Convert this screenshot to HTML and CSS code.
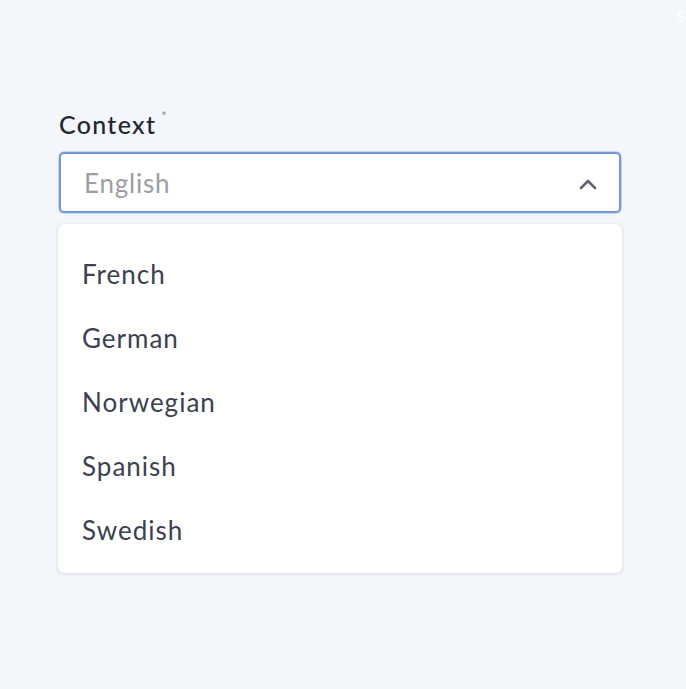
FILE: index.html
```html
<!DOCTYPE html>
<html lang="en">
<head>
<meta charset="utf-8">
<title>Context select</title>
<link rel="stylesheet" href="styles.css">
</head>
<body>
<div class="page">
  <span class="corner">S</span>
  <div class="field">
    <div class="label">Context<span class="req">*</span></div>
    <div class="select">
      <span class="value">English</span>
      <svg class="chev" width="18" height="12" viewBox="0 0 18 12"><path d="M2 10 L9 3 L16 10" fill="none" stroke="#5f6470" stroke-width="2.6" stroke-linecap="round" stroke-linejoin="round"/></svg>
    </div>
    <ul class="menu">
      <li>French</li>
      <li>German</li>
      <li>Norwegian</li>
      <li>Spanish</li>
      <li>Swedish</li>
    </ul>
  </div>
</div>
</body>
</html>
```

FILE: styles.css
```css
* { box-sizing: border-box; }
html, body { margin: 0; padding: 0; }
body {
  background: #f3f6fb;
  font-family: "Lato", "Open Sans", sans-serif;
  width: 686px;
  height: 689px;
  overflow: hidden;
}
.page {
  position: relative;
  width: 686px;
  height: 689px;
  padding: 104px 64px 0 58px;
}
.corner {
  position: absolute;
  right: 1px;
  top: 6px;
  color: #ffffff;
  font-size: 16px;
}
.field {
  width: 564px;
}
.label {
  font-size: 25px;
  font-weight: 500;
  letter-spacing: 1.3px;
  color: #22262e;
  padding-left: 1px;
  height: 40px;
  line-height: 40px;
}
.req {
  font-size: 13px;
  color: #8a8f99;
  vertical-align: top;
  line-height: 24px;
  margin-left: 5px;
  font-weight: 400;
}
.select {
  margin: 8px 1px 0 1px;
  height: 61px;
  background: #fff;
  border: 2px solid #7497d8;
  border-radius: 5px;
  box-shadow: 0 0 0 1px #c9d8f2;
  display: flex;
  align-items: center;
  justify-content: space-between;
  padding: 0 22px 0 23px;
}
.value {
  font-size: 26px;
  letter-spacing: 0.8px;
  color: #9b9ea4;
}
.chev { display: block; margin-top: 2px; }
.menu {
  list-style: none;
  margin: 11px 0 0 0;
  padding: 18px 0 11px 0;
  background: #fff;
  border-radius: 6px;
  box-shadow: 0 1px 4px rgba(30, 40, 60, 0.12), 0 0 1px rgba(30,40,60,0.12);
}
.menu li {
  height: 64px;
  line-height: 64px;
  padding-left: 24px;
  font-size: 26px;
  letter-spacing: 1px;
  color: #3b4150;
}
```
